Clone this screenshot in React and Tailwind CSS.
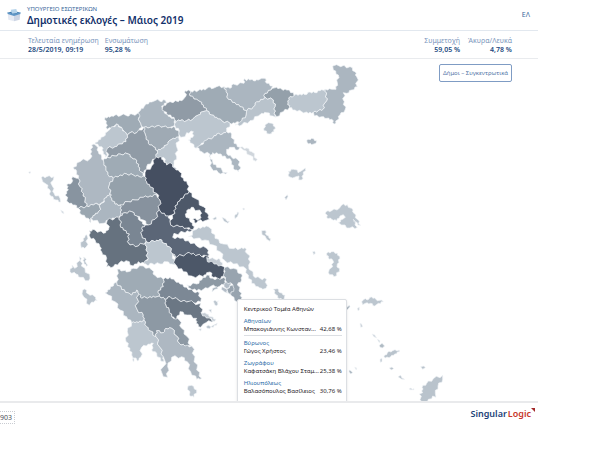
import { useState } from 'react';

// Every group has its own origin, so the outlines stay short to read.
const mapGroups = [
    {
        id: 'north-west', x: 60, y: 240,
        shapes: [
            { id: 'ioannina', fill: '#aeb8c2', points: '215,195 215,215 212,235 180,245 160,262 170,275 175,295 180,320 190,340 195,360 200,378 220,375 245,368 260,352 270,340 268,315 280,295 264,284 258,265 252,250 245,230 235,215 230,198 222,192' },
            { id: 'florina', fill: '#9fabb5', points: '255,112 270,112 285,105 300,108 310,102 322,108 335,102 345,106 355,98 362,105 355,118 362,130 365,142 350,158 330,158 320,165 310,150 300,140 290,132 280,140 262,148 258,130' },
            { id: 'kastoria', fill: '#bcc6cf', points: '290,132 300,142 315,155 322,165 318,185 300,192 285,200 262,205 262,225 256,232 250,215 245,200 225,192 235,180 250,170 262,155 270,148' },
            { id: 'pella', fill: '#abb6c0', points: '362,90 372,80 378,72 395,66 405,62 413,58 420,64 435,60 440,68 425,78 428,90 438,102 450,110 465,120 462,138 450,142 430,140 410,138 390,142 372,142 365,140 362,130 355,118 360,108 355,98' },
            { id: 'imathia', fill: '#9faab4', points: '372,142 390,142 410,138 430,140 450,142 465,142 478,160 476,172 460,175 448,182 440,195 425,205 412,212 400,200 385,190 378,170 374,158' },
            { id: 'kozani', fill: '#909ba6', points: '372,142 374,158 378,170 385,190 400,200 412,212 410,230 395,245 380,260 372,280 362,275 355,260 350,242 335,232 325,222 300,222 285,228 262,232 262,205 285,200 300,192 318,185 322,165 330,158 350,158' },
            { id: 'grevena', fill: '#9fabb5', points: '250,240 262,232 285,228 300,222 325,222 335,232 350,242 355,260 362,275 375,290 358,290 340,285 320,282 300,285 280,295 264,284 258,265 252,250' },
        ],
    },
    {
        id: 'north-east', x: 450, y: 180,
        shapes: [
            { id: 'evros', fill: '#abb6c0', points: '548,18 560,14 572,20 600,20 615,35 620,50 622,80 605,90 590,100 580,98 583,125 585,150 570,165 562,180 553,192 545,178 530,175 515,170 493,168 490,157 505,152 520,147 522,132 530,122 528,105 526,88 545,88 558,88 562,68 565,45 550,30' },
            { id: 'rodopi', fill: '#bcc6cf', points: '416,114 432,106 450,102 465,104 480,96 495,98 510,92 526,88 528,105 530,122 522,132 520,147 505,152 490,157 475,160 455,155 435,150 418,143 414,128' },
            { id: 'xanthi', fill: '#94a0aa', points: '345,100 362,90 368,85 380,82 395,88 410,90 430,98 432,106 416,114 414,128 418,143 400,155 380,170 372,160 375,140 370,120 345,112 340,118' },
            { id: 'kavala', fill: '#b9c3cc', points: '345,112 370,120 375,140 372,160 378,172 368,168 350,158 335,160 325,168 300,182 275,195 255,195 275,182 288,165 290,152 310,140 320,125 340,118' },
            { id: 'thasos', fill: '#b9c3cc', points: '345,195 355,188 365,190 375,200 372,215 358,222 342,212' },
            { id: 'drama', fill: '#abb6c0', points: '222,80 240,85 250,72 262,76 270,68 282,70 283,56 290,62 295,56 310,62 325,60 335,55 345,55 350,70 368,78 362,90 345,100 340,118 320,125 310,140 290,152 270,140 255,128 235,118 228,95' },
            { id: 'serres', fill: '#9fabb5', points: '120,92 140,95 150,88 165,90 175,82 190,85 200,80 222,80 228,95 235,118 255,128 270,140 290,152 288,165 275,182 255,190 240,190 215,182 200,172 185,165 170,152 160,135 150,125 140,118 120,108' },
            { id: 'kilkis', fill: '#909ba6', points: '38,142 50,130 60,125 85,125 100,118 108,108 105,92 120,92 120,108 140,118 150,125 160,135 170,152 158,155 145,165 135,170 128,178 110,182 90,182 75,182 72,172 55,165 45,155 36,150' },
            { id: 'thessaloniki', fill: '#bcc6cf', points: '75,182 90,182 110,182 128,178 135,170 145,165 158,155 170,152 185,165 200,172 215,182 240,190 230,214 218,222 200,222 190,232 170,240 150,258 138,265 125,250 115,240 128,232 130,215 110,218 105,230 92,232 86,222 88,212 75,198' },
            { id: 'halkidiki', fill: '#abb6c0', points: '140,262 152,255 170,240 190,232 200,222 218,222 230,214 245,222 252,250 270,262 265,270 245,262 230,268 230,280 245,292 262,298 272,322 265,335 250,325 245,305 225,288 205,282 188,278 180,290 188,305 200,322 232,338 226,342 205,338 185,325 180,300 180,283 155,275' },
            { id: 'athos', fill: '#d0d6dc', points: '270,262 290,264 305,275 322,298 318,304 300,286 280,270' },
            { id: 'pieria', fill: '#bcc6cf', points: '86,232 70,235 58,242 50,255 35,265 22,272 18,292 30,295 40,292 50,310 65,328 78,335 72,310 80,290 80,260' },
            { id: 'samothraki', fill: '#abb6c0', points: '470,242 485,235 500,242 498,250 485,254 472,248' },
        ],
    },
    {
        id: 'central', x: 180, y: 450,
        shapes: [
            { id: 'thesprotia', fill: '#8894a0', points: '15,135 25,120 20,105 35,98 38,80 50,85 55,85 60,110 70,130 75,150 80,168 55,175 45,165 28,160' },
            { id: 'preveza', fill: '#9aa6b0', points: '55,175 80,168 100,165 125,160 115,185 105,195 92,205 92,218 85,205 65,195' },
            { id: 'arta', fill: '#abb6c0', points: '125,160 140,142 150,130 155,145 165,162 180,165 185,180 180,198 165,205 145,210 130,220 100,212 92,205 105,195 115,185' },
            { id: 'trikala', fill: '#95a1ab', points: '160,85 180,75 200,72 220,75 238,80 255,80 260,95 270,110 290,130 290,135 270,138 250,142 225,150 205,155 180,165 165,162 155,145 150,130 148,105' },
            { id: 'karditsa', fill: '#87929e', points: '180,165 205,155 225,150 250,142 270,138 290,135 300,150 298,180 285,208 265,225 250,210 230,198 215,185 195,188 180,198 185,180' },
            { id: 'larissa', fill: '#454f61', points: '255,68 275,48 285,25 300,20 310,30 320,45 330,38 345,55 358,65 370,85 382,102 387,125 372,138 360,152 345,168 345,190 335,195 325,198 305,190 298,180 300,150 290,130 270,110 260,95 255,80' },
            { id: 'fthiotida', fill: '#5b6677', points: '245,235 255,225 265,225 285,208 298,180 305,190 325,198 330,212 332,225 360,230 380,234 397,240 375,248 342,250 338,262 360,265 385,272 410,288 440,295 448,315 425,320 400,310 380,310 350,322 338,312 328,290 312,280 300,268 285,275 258,275 245,255' },
            { id: 'magnesia', fill: '#4d5869', points: '387,125 405,145 430,170 442,190 448,208 435,212 415,212 408,220 398,208 418,208 425,190 400,172 385,178 376,192 390,215 403,230 400,238 380,234 360,230 332,225 330,212 345,190 345,168 360,152 372,138' },
            { id: 'evrytania', fill: '#7a8693', points: '180,198 195,188 215,185 230,198 240,212 255,225 245,235 245,255 258,275 235,288 210,285 202,275 208,252 190,240 180,225' },
            { id: 'aitoloakarnania', fill: '#66727f', points: '88,242 105,240 130,250 145,240 142,210 165,205 180,198 180,225 190,240 208,252 202,275 210,285 235,288 258,275 258,300 265,325 255,342 235,335 220,348 198,332 178,338 160,350 140,350 140,325 125,305 120,290 105,270 90,262' },
            { id: 'fokida', fill: '#bcc6cf', points: '258,275 285,275 300,268 312,280 328,290 338,312 348,345 335,342 320,335 300,342 275,340 262,346 252,338 265,325 258,300' },
            { id: 'boeotia', fill: '#4c5768', points: '338,312 350,322 380,310 400,310 425,320 442,318 452,332 475,335 492,350 494,370 482,388 460,382 450,366 440,368 430,380 395,378 370,365 350,348' },
        ],
    },
    {
        id: 'east', x: 600, y: 510,
        shapes: [
            { id: 'euboea', fill: '#bcc6cf', points: '-35,200 -10,178 8,170 25,170 35,178 45,205 70,222 100,236 120,236 135,233 140,250 150,258 146,285 160,318 180,325 200,328 198,355 188,358 175,350 155,340 145,315 130,290 100,282 75,272 60,245 40,225 15,210 -10,205' },
            { id: 'oropos', fill: '#c4ccd4', points: '20,262 45,268 60,268 68,285 55,288 38,276 22,275' },
            { id: 'east-attica', fill: '#98a4af', points: '75,292 100,295 125,312 125,330 112,345 125,370 122,390 110,395 95,378 88,370 100,355 95,340 80,345 75,330 72,310' },
            { id: 'west-attica', fill: '#8d99a4', points: '-40,345 -10,342 5,330 20,315 38,325 60,328 72,322 78,340 60,348 30,350 10,358 -10,362 -30,355' },
            { id: 'athens-north', fill: '#b3bdc7', points: '72,340 92,338 90,352 80,356 72,350' },
            { id: 'athens-centre', fill: '#98a4af', points: '80,356 98,345 102,356 92,374 84,368' },
            { id: 'piraeus', fill: '#b3bdc7', points: '66,350 78,356 84,370 74,366 64,358' },
            { id: 'salamina', fill: '#abb6c0', points: '38,355 50,350 54,356 45,358 36,366' },
            { id: 'skiathos', fill: '#bcc6cf', points: '38,146 48,140 50,147 42,150' },
            { id: 'skopelos', fill: '#bcc6cf', points: '66,142 76,146 82,154 88,154 84,160 72,154' },
            { id: 'alonissos', fill: '#bcc6cf', points: '104,140 112,126 117,128 112,140 105,146' },
            { id: 'gioura', fill: '#c4ccd4', points: '128,116 132,114 134,118 130,120' },
            { id: 'skyros', fill: '#b9c3cc', points: '185,182 195,181 200,196 212,206 210,214 200,208 195,198 186,194' },
            { id: 'agios-efstratios', fill: '#bcc6cf', points: '254,82 262,74 264,80 258,90' },
            { id: 'limnos', fill: '#bcc6cf', points: '265,4 280,-2 292,0 294,8 305,2 316,-6 310,14 305,30 296,30 297,18 288,20 278,24 267,20' },
            { id: 'lesvos', fill: '#bcc6cf', points: '378,125 395,122 418,115 425,105 442,104 445,112 455,115 462,130 472,148 482,166 474,165 460,148 472,172 450,174 425,165 415,158 428,148 436,142 430,134 420,138 410,152 395,148 380,142' },
            { id: 'chios', fill: '#bcc6cf', points: '380,250 395,245 412,250 420,265 412,282 418,305 402,320 385,308 388,298 398,290 398,270 385,264' },
            { id: 'psara', fill: '#bcc6cf', points: '338,245 344,244 346,250 341,254' },
            { id: 'andros', fill: '#b9c3cc', points: '220,358 232,356 240,368 255,375 252,388 238,386 228,374' },
        ],
    },
    {
        id: 'ionian', x: 60, y: 480,
        shapes: [
            { id: 'corfu', fill: '#bcc6cf', points: '64,52 80,50 102,50 100,60 92,68 98,80 102,100 120,115 122,126 108,120 92,108 88,88 78,72 68,65' },
            { id: 'othonoi', fill: '#c4ccd4', points: '26,36 31,35 32,39 28,40' },
            { id: 'paxoi', fill: '#bcc6cf', points: '122,150 130,155 132,161 126,158' },
            { id: 'lefkada', fill: '#b9c3cc', points: '182,255 190,235 200,224 204,235 198,262 184,264' },
            { id: 'kefalonia', fill: '#b9c3cc', points: '150,335 156,315 164,325 172,320 178,290 184,295 184,318 195,325 210,355 206,362 180,352 168,342' },
            { id: 'ithaki', fill: '#b9c3cc', points: '190,292 196,294 198,308 203,316 198,319 192,306' },
            { id: 'zakynthos', fill: '#b9c3cc', points: '188,390 194,387 205,402 222,408 232,422 215,426 208,436 192,412 186,402' },
        ],
    },
    {
        id: 'peloponnese', x: 300, y: 780,
        shapes: [
            { id: 'messinia', fill: '#bcc6cf', points: '95,188 110,185 125,185 132,180 140,200 150,212 168,230 180,262 190,290 190,305 182,303 170,280 155,270 160,250 145,252 125,262 122,292 112,303 95,285 90,265 78,245 82,215' },
            { id: 'ilia', fill: '#abb6c0', points: '15,98 30,88 42,70 50,66 65,88 85,98 95,105 110,90 118,102 110,112 112,150 130,165 132,180 125,185 110,185 95,188 80,170 60,150 45,125 25,105' },
            { id: 'achaia', fill: '#9fabb5', points: '50,66 55,40 52,28 70,32 85,35 100,25 130,18 155,30 165,46 190,58 190,80 175,92 178,108 165,112 150,110 125,115 118,102 110,90 95,105 85,98 65,88' },
            { id: 'korinthia', fill: '#7c8895', points: '190,58 210,52 225,62 240,72 260,82 280,95 298,98 302,125 280,128 260,126 235,120 210,110 195,118 178,108 175,92 190,80' },
            { id: 'arkadia', fill: '#8d99a4', points: '110,112 118,102 125,115 150,110 165,112 178,108 195,118 198,135 208,150 215,170 238,180 245,205 260,228 272,258 255,258 238,250 230,228 215,205 198,205 190,218 170,212 168,230 150,212 140,200 132,180 130,165 112,150' },
            { id: 'argolida', fill: '#6b7784', points: '195,118 210,110 235,120 260,126 302,130 305,158 320,172 344,180 318,188 310,192 302,202 288,190 290,175 262,165 240,155 230,177 215,170 208,150 198,135' },
            { id: 'lakonia', fill: '#aeb8c2', points: '170,212 190,218 198,205 215,205 230,228 238,250 255,258 275,258 285,290 290,330 305,355 290,358 272,335 262,305 245,290 215,292 203,320 203,352 190,350 190,290 180,262 168,230' },
            { id: 'troizinia', fill: '#c4ccd4', points: '303,156 320,162 332,170 348,178 344,184 326,174 308,168' },
            { id: 'spetses', fill: '#b9c3cc', points: '296,208 304,206 302,213' },
            { id: 'hydra', fill: '#bcc6cf', points: '318,200 340,196 352,190 340,202 322,205' },
            { id: 'aegina', fill: '#bcc6cf', points: '340,124 356,122 350,137 345,136' },
            { id: 'agistri', fill: '#bcc6cf', points: '326,150 334,148 334,158' },
            { id: 'kythira', fill: '#bcc6cf', points: '264,378 274,376 290,390 282,412 268,405' },
            { id: 'sapientza', fill: '#bcc6cf', points: '98,296 102,295 102,304 99,304' },
        ],
    },
    {
        id: 'aegean', x: 900, y: 780,
        shapes: [
            { id: 'samos', fill: '#bcc6cf', points: '185,125 192,118 206,118 210,112 224,114 232,122 245,120 250,126 235,130 224,138 212,130 196,130 188,134' },
            { id: 'ikaria', fill: '#abb6c0', points: '138,144 148,136 150,140 142,150' },
            { id: 'fournoi', fill: '#c4ccd4', points: '172,145 178,142 178,150 174,152' },
            { id: 'patmos', fill: '#c4ccd4', points: '180,190 185,192 188,200 182,202' },
            { id: 'leros', fill: '#bcc6cf', points: '216,222 224,225 230,234 222,230' },
            { id: 'kalymnos', fill: '#bcc6cf', points: '232,238 240,242 238,248' },
            { id: 'kos-west', fill: '#b0bbc4', points: '238,256 246,250 254,258 247,264 240,262' },
            { id: 'kos', fill: '#b9c3cc', points: '252,290 262,278 278,272 298,270 298,275 284,282 272,290 256,294' },
            { id: 'kefalos', fill: '#b9c3cc', points: '240,298 246,295 246,305 241,307' },
            { id: 'nisyros', fill: '#b9c3cc', points: '268,324 276,321 281,326 274,330' },
            { id: 'tilos', fill: '#b9c3cc', points: '294,350 302,346 306,354 314,358 306,358 298,353' },
            { id: 'symi', fill: '#b9c3cc', points: '362,320 372,318 376,323 368,328' },
            { id: 'chalki', fill: '#bcc6cf', points: '328,386 342,386 342,389 330,389' },
            { id: 'astypalaia', fill: '#b0bbc4', points: '147,330 153,332 158,338 152,342 147,336' },
            { id: 'syrna', fill: '#bcc6cf', points: '164,322 170,324 169,330' },
            { id: 'rhodes', fill: '#b9c3cc', points: '428,346 428,358 414,378 406,400 408,412 398,408 382,426 366,426 358,402 368,398 366,382 380,370 400,356' },
        ],
    },
];

// Bends the longer edges a little. The bend depends only on the edge's two
// ends, so two regions that share an edge get the same border.
const roughen = (points) => {
    const list = points.split(' ').map(p => p.split(',').map(Number));
    const out = [];
    list.forEach((start, i) => {
        const end = list[(i + 1) % list.length];
        out.push(start);
        if (Math.hypot(end[0] - start[0], end[1] - start[1]) < 14) return;

        const forward = start[0] < end[0] || (start[0] === end[0] && start[1] < end[1]);
        const [a, b] = forward ? [start, end] : [end, start];
        const dx = b[0] - a[0];
        const dy = b[1] - a[1];
        const bend = (a[0] + a[1] + b[0] + b[1]) % 2 ? 0.13 : -0.13;
        const mid = [
            [a[0] + dx * 0.35 - dy * bend, a[1] + dy * 0.35 + dx * bend],
            [a[0] + dx * 0.65 + dy * bend, a[1] + dy * 0.65 - dx * bend],
        ];
        out.push(...(forward ? mid : mid.reverse()));
    });
    return out.map(p => p.map(Math.round).join(',')).join(' ');
};

const regions = mapGroups.flatMap(group =>
    group.shapes.map(shape => ({ ...shape, x: group.x, y: group.y, outline: roughen(shape.points) }))
);

const results = [
    { area: 'Αθηναίων', name: 'Μπακογιάννης Κωνσταν...', percent: '42,68 %' },
    { area: 'Βύρωνος', name: 'Γώγος Χρήστος', percent: '23,46 %' },
    { area: 'Ζωγράφου', name: 'Καφατσάκη Βλάχου Σταμ...', percent: '25,38 %' },
    { area: 'Ηλιουπόλεως', name: 'Βαλασόπουλος Βασίλειος', percent: '30,76 %' },
];

const Stat = ({ label, value, align }) => (
    <div className={align === 'right' ? 'text-right' : ''}>
        <p className="text-[#7d97bd]">{label}</p>
        <p className="font-semibold text-[#1d4a80]">{value}</p>
    </div>
);

const BallotIcon = () => (
    <svg viewBox="0 0 42 42" className="w-[14px] h-[14px] shrink-0" aria-hidden="true">
        <path d="M2 14 L21 8 L40 14 L21 22 Z" fill="#3d78ae" />
        <path d="M11 5 L28 3 L31 15 L15 17 Z" fill="#b5d3ea" />
        <path d="M2 14 L21 21 L21 40 L4 35 Z" fill="#e6eaf3" />
        <path d="M40 14 L21 21 L21 40 L38 35 Z" fill="#cdd5e4" />
        <path d="M1 13 L21 19 L41 13 L40 18 L21 24 L2 18 Z" fill="#5f96c6" />
    </svg>
);

const ElectionMap = () => (
    <svg viewBox="0 177 1614 1026" className="block w-full" role="img" aria-label="Χάρτης">
        {regions.map(r => (
            <polygon
                key={r.id}
                transform={`translate(${r.x} ${r.y})`}
                points={r.outline}
                fill={r.fill}
                stroke="#f1f4f7"
                strokeWidth="2"
                strokeLinejoin="round"
            />
        ))}
    </svg>
);

const ResultsCard = () => (
    <div className="absolute left-[44%] top-[240px] w-[110px] pl-[6px] pr-1 pt-1 pb-2 bg-white border border-[#dcdfe3] rounded-xs shadow-sm text-[6px] leading-[8px] text-[#1f2328]">
        <h2 className="py-[1px] mb-[3px]">Κεντρικού Τομέα Αθηνών</h2>
        <ul>
            {results.map((row, i) => (
                <li key={row.area} className={i === 0 ? 'border-b border-[#dcdfe3] pb-[2px] mb-[3px]' : 'pb-1'}>
                    <p className="text-[#2b6ca8]">{row.area}</p>
                    <div className="flex justify-between whitespace-nowrap">
                        <span>{row.name}</span>
                        <span>{row.percent}</span>
                    </div>
                </li>
            ))}
        </ul>
    </div>
);

const App = () => {
    const [summary, setSummary] = useState(false);

    return (
        <div className="min-h-screen bg-white font-['Noto_Sans','Open_Sans',sans-serif]">
            <div className="mr-[62px]">
                <header className="flex items-center h-[31px] pl-[7px] pr-2 border-b border-[#e2e8ef]">
                    <BallotIcon />
                    <div className="ml-[6px] mt-[2px] flex-1">
                        <p className="text-[6px] leading-[9px] text-[#3c6a9c]">ΥΠΟΥΡΓΕΙΟ ΕΣΩΤΕΡΙΚΩΝ</p>
                        <h1 className="text-[10px] leading-[13px] font-semibold text-[#12306a]">Δημοτικές εκλογές – Μάιος 2019</h1>
                    </div>
                    <a href="#lang" className="text-[7px] text-[#3c6a9c]">ΕΛ</a>
                </header>

                <section className="flex items-center h-[28px] pl-7 pr-[26px] text-[7px] leading-[9px] border-b border-[#e9ebee]">
                    <Stat label="Τελευταία ενημέρωση" value="28/5/2019, 09:19" />
                    <div className="ml-[6px] flex-1">
                        <Stat label="Ενσωμάτωση" value="95,28 %" />
                    </div>
                    <div className="flex gap-2">
                        <Stat label="Συμμετοχή" value="59,05 %" align="right" />
                        <Stat label="Άκυρα/Λευκά" value="4,78 %" align="right" />
                    </div>
                </section>

                <main className="relative overflow-hidden border-b-2 border-[#e9eaec]">
                    <ElectionMap />
                    <button
                        type="button"
                        aria-pressed={summary}
                        onClick={() => setSummary(!summary)}
                        className="absolute right-[26px] top-[5px] h-[18px] w-[73px] border border-[#7f9cc4] rounded-xs bg-white text-[6px] text-[#5577a8] whitespace-nowrap"
                    >
                        Δήμοι – Συγκεντρωτικά
                    </button>
                    <ResultsCard />
                </main>

                <footer className="flex items-start justify-between pt-1 pr-[3px]">
                    <span className="mt-1 pr-[2px] border border-l-0 border-dotted border-[#c9ccd2] text-[7px] leading-[11px] text-[#4a4f57]">903</span>
                    <div className="flex items-start text-[9px] leading-[13px] font-semibold">
                        <span className="text-[#1c3f78]">Singular</span>
                        <span className="ml-[1px] text-[#c8382c]">Logic</span>
                        <svg viewBox="0 0 4 4" className="mt-[1px] w-[4px] h-[4px]" aria-hidden="true">
                            <path d="M0 0 H4 V4 Z" fill="#a32a2a" />
                        </svg>
                    </div>
                </footer>
            </div>
        </div>
    );
};

export default App;
